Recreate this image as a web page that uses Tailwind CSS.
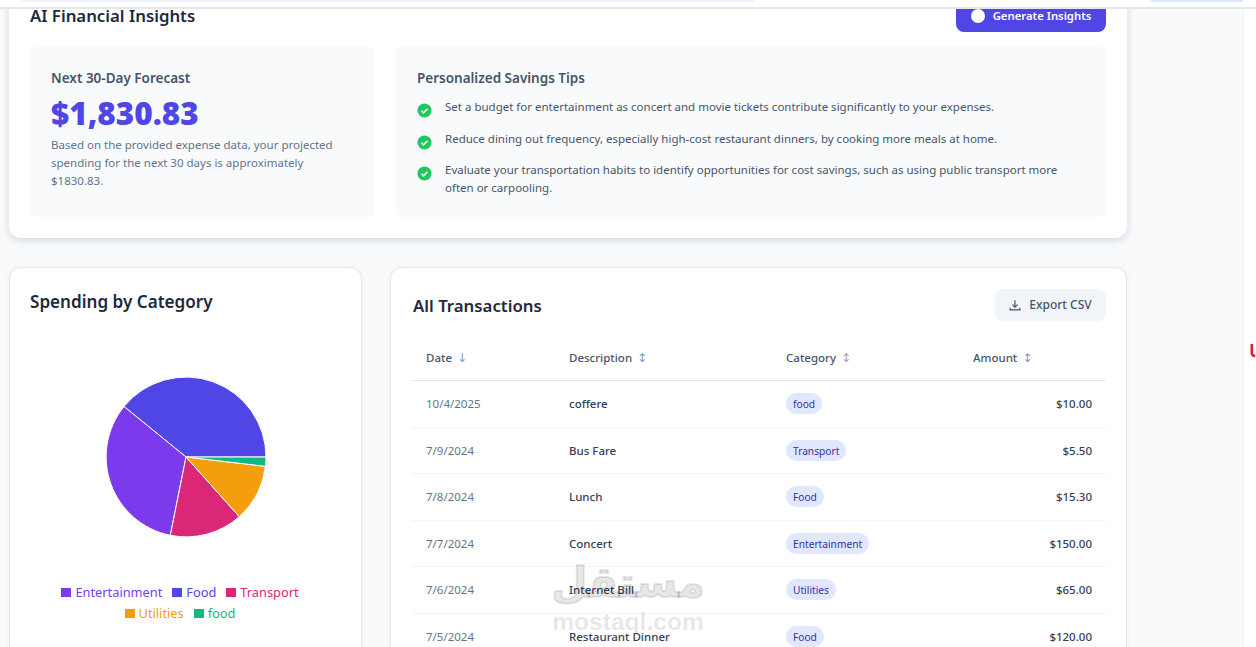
<!doctype html>
<html><head><meta charset="utf-8"><script src="https://cdn.jsdelivr.net/npm/@tailwindcss/browser@4"></script></head>
<body class="bg-white">
<div class="relative flex h-[647px] w-[1256px] overflow-hidden font-['Noto_Sans',sans-serif] text-[#334155]">
  <!-- sticky top bar -->
  <div class="absolute inset-x-0 top-0 z-10 flex h-[9px] justify-between border-b-2 border-[#e5e7eb] bg-white pl-[22px] pr-[13px]">
    <div class="h-[2px] w-[733px] rounded-b-lg bg-[#eef2ff]"></div>
    <div class="h-[2px] w-[93px] rounded-b-lg bg-[#dbeafe]"></div>
  </div>
  <main class="w-[1243px] shrink-0 bg-[#f8fafc] pl-[9px] pr-[116px]">
    <section class="-mt-[25px] h-[263px] rounded-xl bg-white px-[21px] pt-[21px] shadow-[0_2px_8px_rgba(15,23,42,0.16)]">
      <div class="flex h-[36px] items-center justify-between">
        <h2 class="pt-[4px] text-[16.8px] font-semibold leading-none text-[#1e293b]">AI Financial Insights</h2>
        <button class="flex h-[36px] w-[150px] items-center justify-center gap-[8px] rounded-lg bg-[#4f46e5] pt-[4px] text-[11.3px] font-semibold text-white"><span class="h-[14px] w-[14px] rounded-full bg-white"></span>Generate Insights</button>
      </div>
      <div class="mt-[14px] flex gap-[21px]">
        <div class="h-[171px] w-[344px] rounded-lg bg-[#f8fafc] px-[21px] pt-[23px]">
          <h3 class="text-[13.5px] font-semibold leading-[18px] text-[#475569]">Next 30-Day Forecast</h3>
          <p class="mt-[5px] text-[31.5px] font-black leading-[42px] text-[#4f46e5]">$1,830.83</p>
          <p class="mt-[2px] text-[11.5px] leading-[18px] text-[#64748b]">Based on the provided expense data, your projected spending for the next 30 days is approximately $1830.83.</p>
        </div>
        <div class="h-[171px] flex-1 rounded-lg bg-[#f8fafc] pl-[22px] pr-[40px] pt-[23px]">
          <h3 class="text-[13.5px] font-semibold leading-[18px] text-[#475569]">Personalized Savings Tips</h3>
          <ul class="mt-[11px] flex flex-col gap-[11.5px] text-[11.5px] leading-[18px] text-[#475569]">
            <li class="flex gap-[13px]"><svg class="mt-[5px] shrink-0" width="15" height="15" viewBox="0 0 16 16"><circle cx="8" cy="8" r="7.5" fill="#22c55e"/><path d="M4.8 8.3l2.2 2.2 4.2-4.4" fill="none" stroke="#fff" stroke-width="1.6"/></svg><span>Set a budget for entertainment as concert and movie tickets contribute significantly to your expenses.</span></li>
            <li class="flex gap-[13px]"><svg class="mt-[5px] shrink-0" width="15" height="15" viewBox="0 0 16 16"><circle cx="8" cy="8" r="7.5" fill="#22c55e"/><path d="M4.8 8.3l2.2 2.2 4.2-4.4" fill="none" stroke="#fff" stroke-width="1.6"/></svg><span>Reduce dining out frequency, especially high-cost restaurant dinners, by cooking more meals at home.</span></li>
            <li class="flex gap-[13px]"><svg class="mt-[5px] shrink-0" width="15" height="15" viewBox="0 0 16 16"><circle cx="8" cy="8" r="7.5" fill="#22c55e"/><path d="M4.8 8.3l2.2 2.2 4.2-4.4" fill="none" stroke="#fff" stroke-width="1.6"/></svg><span>Evaluate your transportation habits to identify opportunities for cost savings, such as using public transport more often or carpooling.</span></li>
          </ul>
        </div>
      </div>
    </section>
    <div class="mt-[29px] flex gap-[28px]">
      <section class="h-[400px] w-[353px] shrink-0 rounded-xl border border-[#e2e8f0] bg-white px-[20px] pt-[21px] shadow-[0_1px_6px_rgba(15,23,42,0.06)]">
        <h2 class="text-[17.1px] font-semibold leading-[26px] text-[#1e293b]">Spending by Category</h2>
        <svg class="ml-[75px] mt-[61px] block" width="162" height="162" viewBox="104 375.7 162 162">
          <g stroke="#fff" stroke-width="1">
            <path d="M185 456.7L265 456.7A80 80 0 0 0 123 406.2Z" fill="#4f46e5"/>
            <path d="M185 456.7L123 406.2A80 80 0 0 0 169.3 535Z" fill="#7c3aed"/>
            <path d="M185 456.7L169.3 535A80 80 0 0 0 238.3 516.4Z" fill="#db2777"/>
            <path d="M185 456.7L238.3 516.4A80 80 0 0 0 264.4 466Z" fill="#f59e0b"/>
            <path d="M185 456.7L264.4 466A80 80 0 0 0 265 456.7Z" fill="#10b981"/>
          </g>
        </svg>
        <div class="mt-[44px] flex flex-wrap justify-center gap-x-[10px] pl-[10px] pr-[21px] text-[12.8px] leading-[21px]">
          <span class="flex items-center gap-[4px] text-[#7c3aed]"><i class="h-[9px] w-[10px] bg-[#7c3aed]"></i>Entertainment</span>
          <span class="flex items-center gap-[4px] text-[#4f46e5]"><i class="h-[9px] w-[10px] bg-[#4f46e5]"></i>Food</span>
          <span class="flex items-center gap-[4px] text-[#db2777]"><i class="h-[9px] w-[10px] bg-[#db2777]"></i>Transport</span>
          <span class="flex items-center gap-[4px] text-[#f59e0b]"><i class="h-[9px] w-[10px] bg-[#f59e0b]"></i>Utilities</span>
          <span class="flex items-center gap-[4px] text-[#10b981]"><i class="h-[9px] w-[10px] bg-[#10b981]"></i>food</span>
        </div>
      </section>
      <section class="h-[420px] w-[737px] shrink-0 rounded-xl border border-[#e2e8f0] bg-white pl-[21px] pr-[20px] pt-[21px] shadow-[0_1px_6px_rgba(15,23,42,0.06)]">
        <div class="flex h-[32px] items-center justify-between">
          <h2 class="ml-[1px] pt-[2px] text-[16.8px] font-semibold text-[#1e293b]">All Transactions</h2>
          <button class="flex h-[32px] w-[111px] items-center justify-center gap-[8px] rounded-lg bg-[#f1f5f9] text-[12px] font-medium text-[#475569]"><svg width="12" height="12" viewBox="0 0 16 16" fill="none" stroke="#475569" stroke-width="1.6"><path d="M8 1.5v9M4.5 7.5 8 11l3.5-3.5M1.5 11.5v3h13v-3"/></svg>Export CSV</button>
        </div>
        <table class="mt-[14px] w-[694px] table-fixed border-collapse text-[11.5px]">
          <colgroup><col class="w-[143px]"><col class="w-[217px]"><col class="w-[187px]"><col class="w-[147px]"></colgroup>
          <thead><tr class="h-[45.5px] border-b border-[#e2e8f0] text-left text-[#475569]">
            <th class="pl-[14px] font-medium">Date <span class="ml-[2px] font-['DejaVu_Sans',sans-serif] text-[12px] font-normal leading-none text-[#7c9cc0]">↓</span></th>
            <th class="pl-[14px] font-medium">Description <span class="ml-[2px] font-['DejaVu_Sans',sans-serif] text-[12px] font-normal leading-none text-[#7c9cc0]">↕</span></th>
            <th class="pl-[14px] font-medium">Category <span class="ml-[2px] font-['DejaVu_Sans',sans-serif] text-[12px] font-normal leading-none text-[#a8a29e]">↕</span></th>
            <th class="pl-[14px] font-medium">Amount <span class="ml-[2px] font-['DejaVu_Sans',sans-serif] text-[12px] font-normal leading-none text-[#8b8fd0]">↕</span></th>
          </tr></thead>
          <tbody>
            <tr class="h-[46.5px] border-b border-[#f1f5f9]"><td class="pl-[14px] text-[#64748b]">10/4/2025</td><td class="pl-[14px] font-medium text-[#334155]">coffere</td><td class="pl-[14px]"><span class="inline-block h-[21px] rounded-full bg-[#e0e7ff] px-[7px] pt-[1px] text-[10.2px] leading-[21px] text-[#3730a3]">food</span></td><td class="pr-[14px] text-right font-medium text-[#334155]">$10.00</td></tr>
            <tr class="h-[46.5px] border-b border-[#f1f5f9]"><td class="pl-[14px] text-[#64748b]">7/9/2024</td><td class="pl-[14px] font-medium text-[#334155]">Bus Fare</td><td class="pl-[14px]"><span class="inline-block h-[21px] rounded-full bg-[#e0e7ff] px-[7px] pt-[1px] text-[10.2px] leading-[21px] text-[#3730a3]">Transport</span></td><td class="pr-[14px] text-right font-medium text-[#334155]">$5.50</td></tr>
            <tr class="h-[46.5px] border-b border-[#f1f5f9]"><td class="pl-[14px] text-[#64748b]">7/8/2024</td><td class="pl-[14px] font-medium text-[#334155]">Lunch</td><td class="pl-[14px]"><span class="inline-block h-[21px] rounded-full bg-[#e0e7ff] px-[7px] pt-[1px] text-[10.2px] leading-[21px] text-[#3730a3]">Food</span></td><td class="pr-[14px] text-right font-medium text-[#334155]">$15.30</td></tr>
            <tr class="h-[46.5px] border-b border-[#f1f5f9]"><td class="pl-[14px] text-[#64748b]">7/7/2024</td><td class="pl-[14px] font-medium text-[#334155]">Concert</td><td class="pl-[14px]"><span class="inline-block h-[21px] rounded-full bg-[#e0e7ff] px-[7px] pt-[1px] text-[10.2px] leading-[21px] text-[#3730a3]">Entertainment</span></td><td class="pr-[14px] text-right font-medium text-[#334155]">$150.00</td></tr>
            <tr class="h-[46.5px] border-b border-[#f1f5f9]"><td class="pl-[14px] text-[#64748b]">7/6/2024</td><td class="pl-[14px] font-medium text-[#334155]">Internet Bill</td><td class="pl-[14px]"><span class="inline-block h-[21px] rounded-full bg-[#e0e7ff] px-[7px] pt-[1px] text-[10.2px] leading-[21px] text-[#3730a3]">Utilities</span></td><td class="pr-[14px] text-right font-medium text-[#334155]">$65.00</td></tr>
            <tr class="h-[46.5px] border-b border-[#f1f5f9]"><td class="pl-[14px] text-[#64748b]">7/5/2024</td><td class="pl-[14px] font-medium text-[#334155]">Restaurant Dinner</td><td class="pl-[14px]"><span class="inline-block h-[21px] rounded-full bg-[#e0e7ff] px-[7px] pt-[1px] text-[10.2px] leading-[21px] text-[#3730a3]">Food</span></td><td class="pr-[14px] text-right font-medium text-[#334155]">$120.00</td></tr>
          </tbody>
        </table>
      </section>
    </div>
  </main>
  <aside class="relative flex-1 border-l border-[#eef0f3] bg-white">
    <svg class="absolute left-[6px] top-[343px]" width="6" height="15" viewBox="0 0 6 15"><path d="M1.8 1v9c0 2 1 3 3.5 3" fill="none" stroke="#dc2626" stroke-width="2.6"/></svg>
  </aside>
  <!-- watermark -->
  <div class="pointer-events-none absolute left-[552px] top-[556px] z-20 flex w-[152px] flex-col items-center text-black/10">
    <span class="font-['DejaVu_Sans',sans-serif] text-[42px] font-bold leading-[54px] [-webkit-text-stroke:2px_rgba(0,0,0,0.1)]" dir="rtl">مستقل</span>
    <span class="font-['Liberation_Sans',sans-serif] text-[24.6px] font-bold leading-[24px]">mostaql.com</span>
  </div>
</div>
</body></html>
